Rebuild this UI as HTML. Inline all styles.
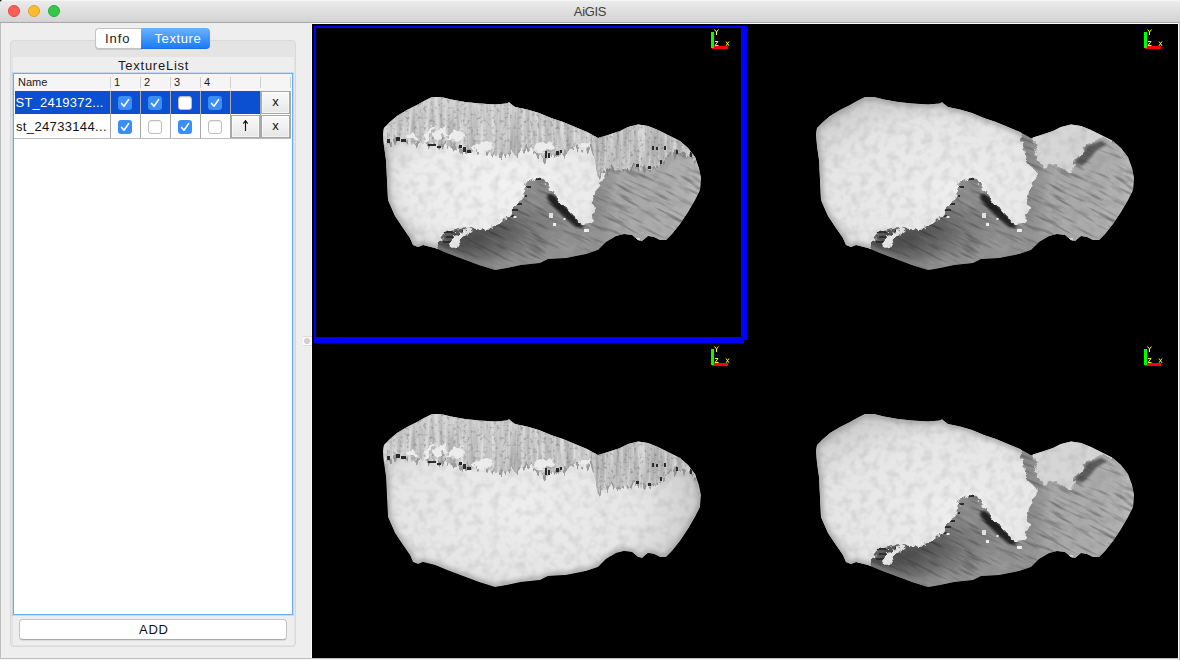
<!DOCTYPE html>
<html><head><meta charset="utf-8">
<style>
*{box-sizing:border-box;margin:0;padding:0}
html,body{width:1180px;height:660px;overflow:hidden;background:#eeeeee;font-family:"Liberation Sans",sans-serif;}
#win{position:absolute;left:0;top:0;width:1180px;height:660px;background:#eeeeee;overflow:hidden}
.abs{position:absolute}
#titlebar{left:0;top:0;width:1180px;height:23px;background:linear-gradient(#ebebeb,#d3d3d3 21px,#bdbdbd 21px,#bdbdbd 22px);border-bottom:1px solid #a6a6a6;border-top:1px solid #f5f5f5}
#title{left:0;width:1180px;top:4px;text-align:center;font-size:13px;color:#3e3e3e;line-height:15px;letter-spacing:-0.3px}
.tl{width:12px;height:12px;border-radius:50%;top:5px}
#lb{left:0;top:23px;width:1px;height:638px;background:#bdbdbd}
#bb{left:0;top:658px;width:1180px;height:1px;background:#c0c0c0}
#bb2{left:0;top:659px;width:1180px;height:1px;background:#f4f4f4}
#pane{left:10px;top:40px;width:286px;height:607px;background:#e4e4e4;border:1px solid #d9d9d9;border-radius:4px}
#inner{left:13px;top:57px;width:281px;height:588px;background:#eeeeee}
#tabs{left:95px;top:28px;height:21px}
#tabInfo{left:95px;top:28px;width:47px;height:21px;background:#fff;border:1px solid #c3c3c3;border-right:none;border-radius:4px 0 0 4px;box-shadow:0 1px 0 rgba(0,0,0,.12);font-size:13px;line-height:19px;text-align:left;padding-left:9px;letter-spacing:.95px;color:#222}
#tabTex{left:141px;top:28px;width:69px;height:21px;background:linear-gradient(#6cb2fb,#1a7cf9);border-radius:0 4px 4px 0;font-size:13px;line-height:22px;text-align:left;padding-left:13.5px;letter-spacing:.6px;color:#fff;border-bottom:1px solid #1a6de0}
#tlist{left:118px;top:58.5px;white-space:nowrap;font-size:13px;line-height:14px;color:#1a1a1a;letter-spacing:.76px}
#table{left:13px;top:73px;width:280px;height:542px;background:#fff;border:1px solid #6aaef2;box-shadow:0 0 0 1px rgba(120,180,245,.35)}
#thead{left:14px;top:74px;width:278px;height:17px;background:#f5f5f5}
.hd{top:76px;font-size:11px;line-height:13px;color:#1a1a1a}
.hsep{top:77px;width:1px;height:11px;background:#cfcfcf}
#row1{left:15px;top:91px;width:245px;height:23px;background:#0a50d1}
.vsep{top:91px;width:1px;height:47px;background:#a9a9a9}
#rowline{left:14px;top:138px;width:277px;height:1px;background:#bcbcbc}
.cell{font-size:13px;line-height:15px;left:16px;white-space:nowrap}
.cb{width:14px;height:14px;border-radius:3px}
.cb.on{background:#3b8ef6}
.cb.off{background:#fff;border:1px solid #bdbdbd;box-shadow:inset 0 1px 1px rgba(0,0,0,.08)}
.btn{width:29px;height:22px;background:linear-gradient(#fafafa,#e6e6e6);border:1px solid #a8a8a8;font-size:13px;line-height:19px;text-align:center;color:#111;box-shadow:inset 0 0 0 1px rgba(255,255,255,.5)}
#add{left:19px;top:619px;width:268px;height:21px;background:#fff;border:1px solid #c4c4c4;border-bottom-color:#a9a9a9;border-radius:4px;text-align:left;padding-left:119px;letter-spacing:.75px;font-size:13px;line-height:19px;color:#111;box-shadow:0 1px 0 rgba(0,0,0,.08)}
#split{left:311px;top:23px;width:1px;height:635px;background:#fafafa}
#handle{left:303px;top:336px;width:9px;height:10px;background:#fbfbfb;border-top:1px solid #dcdcdc;border-bottom:1px solid #dcdcdc}
#hdot{left:304px;top:338px;width:6px;height:6px;border-radius:50%;background:#d4d4d4;border:1px solid #c6c6c6}
#topwhite{left:311px;top:23px;width:868px;height:1px;background:#ffffff}
#rwhite{left:1178px;top:23px;width:1px;height:636px;background:#fbfbfb}
#rgray{left:1179px;top:22px;width:1px;height:638px;background:#bdbdbd}
</style></head><body>
<div id="win">
<div id="titlebar" class="abs"></div>
<div class="abs" style="left:0;top:0;width:3px;height:3px;background:radial-gradient(circle at 100% 100%,transparent 2.5px,#222 3.5px)"></div>
<div class="abs tl" style="left:8px;background:#fc5f58;border:1px solid #e2463f"></div>
<div class="abs tl" style="left:28px;background:#fdbc2f;border:1px solid #e0a028"></div>
<div class="abs tl" style="left:48px;background:#34c84a;border:1px solid #24aa35"></div>
<div id="title" class="abs">AiGIS</div>
<div id="topwhite" class="abs"></div>
<div id="lb" class="abs"></div>
<div id="pane" class="abs"></div>
<div id="inner" class="abs"></div>
<div id="tabInfo" class="abs">Info</div>
<div id="tabTex" class="abs">Texture</div>
<div id="tlist" class="abs">TextureList</div>
<div id="table" class="abs"></div>
<div id="thead" class="abs"></div>
<div class="abs hd" style="left:18px">Name</div>
<div class="abs hd" style="left:114px">1</div>
<div class="abs hd" style="left:144px">2</div>
<div class="abs hd" style="left:174px">3</div>
<div class="abs hd" style="left:204px">4</div>
<div class="abs hsep" style="left:110px"></div><div class="abs hsep" style="left:140px"></div><div class="abs hsep" style="left:170px"></div><div class="abs hsep" style="left:200px"></div><div class="abs hsep" style="left:230px"></div><div class="abs hsep" style="left:260px"></div><div class="abs hsep" style="left:290px"></div>
<div id="row1" class="abs"></div>
<div class="abs vsep" style="left:110px"></div><div class="abs vsep" style="left:140px"></div><div class="abs vsep" style="left:170px"></div><div class="abs vsep" style="left:200px"></div><div class="abs vsep" style="left:230px"></div><div class="abs vsep" style="left:260px"></div><div class="abs vsep" style="left:290px"></div>
<div id="rowline" class="abs"></div>
<div class="abs cell" style="top:95px;left:15.5px;color:#fff;letter-spacing:.22px">ST_2419372...</div>
<div class="abs cell" style="top:119px;color:#111;letter-spacing:.35px">st_24733144...</div>
<!-- checkboxes row1 -->
<div class="abs cb on" style="left:118px;top:96px"></div>
<div class="abs cb on" style="left:148px;top:96px"></div>
<div class="abs cb off" style="left:178px;top:96px"></div>
<div class="abs cb on" style="left:208px;top:96px"></div>
<div class="abs cb on" style="left:118px;top:120px"></div>
<div class="abs cb off" style="left:148px;top:120px"></div>
<div class="abs cb on" style="left:178px;top:120px"></div>
<div class="abs cb off" style="left:208px;top:120px"></div>
<svg class="abs" style="left:0;top:0" width="320" height="150" viewBox="0 0 320 150">
<g fill="none" stroke="#fff" stroke-width="1.6" stroke-linecap="round" stroke-linejoin="round">
<path id="ck" d="M121.6 103.4 L124 106.2 L128.6 99.6"/>
<use href="#ck" x="30"/><use href="#ck" x="90"/>
<use href="#ck" y="24"/><use href="#ck" x="60" y="24"/>
</g></svg>
<div class="abs btn" style="left:261px;top:91px;height:23px;line-height:20px">x</div>
<div class="abs btn" style="left:261px;top:115px;height:23px;line-height:20px">x</div>
<div class="abs btn" style="left:231px;top:115px;height:23px"><svg width="27" height="20" viewBox="0 0 27 20" style="display:block"><path d="M13.5 5 V15 M11.3 7.6 L13.5 4.6 L15.7 7.6" stroke="#111" stroke-width="1.1" fill="none"/></svg></div>
<div id="add" class="abs">ADD</div>
<div id="split" class="abs"></div>
<div id="handle" class="abs"></div><div id="hdot" class="abs"></div>
<div id="bb" class="abs"></div><div id="bb2" class="abs"></div>
<div id="rwhite" class="abs"></div><div id="rgray" class="abs"></div>
<!--VS--><svg class="abs" style="left:312px;top:24px" width="866" height="634" viewBox="312 24 866 634">
<defs>
<path id="sil" d="M383,134 L384,128 390,122 397,116 407,110 417,105 425,100.5 432,97 441,97 451,99.5 465,102 479,103.5 495,104.5 507,103.5 509,102.3 511,104 515,107 527,109.5 539,113 551,118 563,122 575,127 587,132 598,138 608,135 620,131 628,127 638,124.5 648,126 658,130 668,135 680,141 688,148 695,157 699,168 701,178 700,190 695,200 688,212 680,224 672,234 666,240 660,240 654,237 648,236 642,241 638,240 632,235 624,234 616,236 606,242 598,250 586,254 566,258 548,259 540,263 521,265 507,268 495,270 479,265 463,259 447,253 435,248 423,245 418,247 413,245 410,238 403,228 395,216 388,200 387,180 386,160 384,146 Z"/>
<clipPath id="csil"><use href="#sil"/></clipPath>
<path id="band" d="M370,85 L370,146 385,144 397,139 409,140 425,142 435,144 455,146 469,152 481,148 495,155 515,152 531,148 545,158 555,154 575,148 591,146 595,158 598,176 608,168 620,170 636,166 650,170 660,164 670,154 680,152 690,154 696,160 715,160 715,85 Z"/>
<path id="whiteTL" d="M370,85 L600,85 600,160 605,176 599,186 593,198 595,210 591,222 583,224 571,214 559,200 551,190 545,179 535,178 527,182 523,196 517,204 509,216 499,224 487,230 467,228 445,232 441,240 433,260 370,260 Z"/>
<path id="whiteTR" d="M370,85 L587,85 587,134 591,148 593,162 605,172 599,184 595,196 597,208 591,222 583,224 571,214 559,200 551,190 545,179 535,178 527,182 523,196 517,204 509,216 499,224 487,230 467,228 445,232 441,240 433,260 370,260 Z"/>
<path id="lobeTR" d="M600,115 L600,138 604,156 610,169 623,164 630,169 639,172 642,161 650,152 656,143 669,139 682,141 682,115 Z"/>

<!-- filters -->
<filter id="fStreak" filterUnits="userSpaceOnUse" x="360" y="80" width="360" height="120" color-interpolation-filters="sRGB">
<feTurbulence type="fractalNoise" baseFrequency="0.23 0.018" numOctaves="3" seed="4"/>
<feColorMatrix type="matrix" values="0.42 0 0 0 0.57  0.42 0 0 0 0.57  0.42 0 0 0 0.57  0 0 0 0 1"/>
</filter>
<filter id="fTeeth" filterUnits="userSpaceOnUse" x="360" y="70" width="370" height="140" color-interpolation-filters="sRGB">
<feTurbulence type="fractalNoise" baseFrequency="0.28 0.012" numOctaves="2" seed="11"/>
<feColorMatrix type="matrix" values="0 0 0 0 .5  0 1 0 0 0  0 0 1 0 0  0 0 0 0 1" result="n"/>
<feDisplacementMap in="SourceGraphic" in2="n" scale="16" xChannelSelector="R" yChannelSelector="G"/>
</filter>
<filter id="fTeeth2" filterUnits="userSpaceOnUse" x="360" y="70" width="370" height="140" color-interpolation-filters="sRGB">
<feTurbulence type="fractalNoise" baseFrequency="0.3 0.012" numOctaves="2" seed="23"/>
<feColorMatrix type="matrix" values="0 0 0 0 .5  0 1 0 0 0  0 0 1 0 0  0 0 0 0 1" result="n"/>
<feDisplacementMap in="SourceGraphic" in2="n" scale="22" xChannelSelector="R" yChannelSelector="G"/>
</filter>
<filter id="fJag" filterUnits="userSpaceOnUse" x="360" y="80" width="360" height="200" color-interpolation-filters="sRGB">
<feTurbulence type="fractalNoise" baseFrequency="0.16" numOctaves="2" seed="5" result="n"/>
<feDisplacementMap in="SourceGraphic" in2="n" scale="9" xChannelSelector="R" yChannelSelector="G"/>
</filter>
<filter id="fShadowStreak" filterUnits="userSpaceOnUse" x="300" y="0" width="500" height="400" color-interpolation-filters="sRGB">
<feTurbulence type="fractalNoise" baseFrequency="0.035 0.3" numOctaves="2" seed="9"/>
<feColorMatrix type="matrix" values="0 0 0 0 0  0 0 0 0 0  0 0 0 0 0  -1.7 0 0 0 0.82"/>
</filter>
<filter id="fShadowLight" filterUnits="userSpaceOnUse" x="300" y="0" width="500" height="400" color-interpolation-filters="sRGB">
<feTurbulence type="fractalNoise" baseFrequency="0.04 0.35" numOctaves="2" seed="31"/>
<feColorMatrix type="matrix" values="0 0 0 0 1  0 0 0 0 1  0 0 0 0 1  1.2 0 0 0 -0.62"/>
</filter>
<filter id="fBump" filterUnits="userSpaceOnUse" x="360" y="80" width="360" height="200" color-interpolation-filters="sRGB">
<feTurbulence type="fractalNoise" baseFrequency="0.11" numOctaves="2" seed="2"/>
<feColorMatrix type="matrix" values="0 0 0 0 0.35  0 0 0 0 0.35  0 0 0 0 0.35  -1.1 0 0 0 0.62"/>
</filter>

<mask id="mBand" maskUnits="userSpaceOnUse" x="360" y="80" width="360" height="130"><use href="#band" fill="#fff" filter="url(#fTeeth)"/></mask>

<radialGradient id="gWhite" gradientUnits="userSpaceOnUse" cx="500" cy="185" r="130" gradientTransform="translate(500 185) scale(1 .62) translate(-500 -185)">
<stop offset="0" stop-color="#f2f2f2"/><stop offset=".7" stop-color="#ebebeb"/><stop offset="1" stop-color="#d6d6d6"/></radialGradient>
<linearGradient id="gShadow" gradientUnits="userSpaceOnUse" x1="540" y1="180" x2="560" y2="265">
<stop offset="0" stop-color="#7a7a7a"/><stop offset=".5" stop-color="#868686"/><stop offset="1" stop-color="#9c9c9c"/></linearGradient>
<linearGradient id="gShadowR" gradientUnits="userSpaceOnUse" x1="596" y1="0" x2="701" y2="0">
<stop offset="0" stop-color="#9a9a9a" stop-opacity="0"/><stop offset=".2" stop-color="#a6a6a6"/><stop offset=".85" stop-color="#afafaf"/><stop offset="1" stop-color="#bebebe"/></linearGradient>
<linearGradient id="gBandShade" gradientUnits="userSpaceOnUse" x1="0" y1="97" x2="0" y2="165">
<stop offset="0" stop-color="#d8d8d8" stop-opacity=".55"/><stop offset=".5" stop-color="#c0c0c0" stop-opacity=".2"/><stop offset="1" stop-color="#a0a0a0" stop-opacity=".15"/></linearGradient>
<radialGradient id="gLight" gradientUnits="userSpaceOnUse" cx="520" cy="190" r="190" gradientTransform="translate(520 190) scale(1 .55) translate(-520 -190)">
<stop offset="0" stop-color="#eeeeee"/><stop offset=".65" stop-color="#e5e5e5"/><stop offset="1" stop-color="#c8c8c8"/></radialGradient>

<radialGradient id="gShDark" gradientUnits="userSpaceOnUse" cx="472" cy="240" r="105" gradientTransform="translate(472 240) rotate(-12) scale(1 .42) translate(-472 -240)">
<stop offset="0" stop-color="#4a4a4a"/><stop offset=".45" stop-color="#5c5c5c" stop-opacity=".85"/><stop offset="1" stop-color="#8b8b8b" stop-opacity="0"/></radialGradient>
<linearGradient id="gShBottom" gradientUnits="userSpaceOnUse" x1="520" y1="225" x2="535" y2="270">
<stop offset="0" stop-color="#a0a0a0" stop-opacity="0"/><stop offset="1" stop-color="#a0a0a0" stop-opacity=".5"/></linearGradient>
<filter id="fBlur1" filterUnits="userSpaceOnUse" x="530" y="175" width="70" height="65"><feGaussianBlur stdDeviation="1.3"/></filter>
<filter id="fBlur2" filterUnits="userSpaceOnUse" x="630" y="130" width="60" height="50"><feGaussianBlur stdDeviation="1.2"/></filter>
<filter id="fBlur3" filterUnits="userSpaceOnUse" x="360" y="80" width="360" height="200"><feGaussianBlur stdDeviation="2.2"/></filter>
<clipPath id="cLeft"><rect x="370" y="85" width="226" height="200"/></clipPath>
<g id="rim"><use href="#sil" fill="none" stroke="#8c8c8c" stroke-width="7" opacity=".55" filter="url(#fBlur3)"/></g>
<filter id="fMottle" filterUnits="userSpaceOnUse" x="360" y="80" width="360" height="120" color-interpolation-filters="sRGB">
<feTurbulence type="fractalNoise" baseFrequency="0.3" numOctaves="2" seed="17"/>
<feColorMatrix type="matrix" values="0 0 0 0 0.25  0 0 0 0 0.25  0 0 0 0 0.25  -2.2 0 0 0 1.0"/>
</filter>
<!-- composite pieces -->
<g id="pShadow">
<use href="#sil" fill="#8b8b8b"/>
<rect x="380" y="150" width="330" height="130" fill="url(#gShDark)"/>
<rect x="380" y="150" width="330" height="130" fill="url(#gShBottom)"/>
<rect x="590" y="120" width="115" height="130" fill="url(#gShadowR)"/>
<g transform="rotate(27 540 200)" opacity=".6"><rect x="340" y="40" width="420" height="320" filter="url(#fShadowStreak)"/><rect x="340" y="40" width="420" height="320" filter="url(#fShadowLight)" opacity=".45"/></g>
<path d="M547,195 L552,194 560,201 570,211 579,221 584,228 576,227 565,218 555,208 548,200 Z" fill="#121212" opacity=".9" filter="url(#fBlur1)"/>
<g fill="#2c2c2c"><rect x="524" y="186" width="7" height="2"/><rect x="521" y="195" width="6" height="2"/><rect x="516" y="203" width="6" height="2"/><rect x="512" y="209" width="6" height="2"/><rect x="508" y="215" width="6" height="2"/><rect x="536" y="178" width="5" height="2"/><rect x="444" y="231" width="12" height="2"/><rect x="446" y="236" width="10" height="2"/><rect x="443" y="241" width="9" height="2"/><rect x="462" y="230" width="8" height="2"/></g>
<path d="M449,244 L455,236 468,228 472,231 462,238 457,248 Z" fill="#e6e6e6" filter="url(#fJag)"/>
<g fill="#f0f0f0"><rect x="549" y="213" width="4" height="5"/><rect x="553" y="223" width="3" height="3"/><rect x="563.5" y="218" width="2" height="2"/><rect x="584" y="229" width="5" height="3"/><rect x="513.5" y="216" width="3" height="2"/><rect x="636" y="238" width="4" height="3" fill="#ddd"/></g>
</g>
<g id="pBand">
<use href="#band" fill="#7c7c7c" filter="url(#fTeeth2)" transform="translate(0 1.5)" opacity=".7"/>
<g mask="url(#mBand)">
<g transform="translate(0 0)"><rect x="360" y="80" width="360" height="120" filter="url(#fStreak)"/></g>
<rect x="360" y="80" width="360" height="120" fill="url(#gBandShade)"/>
<rect x="360" y="80" width="360" height="120" filter="url(#fMottle)" opacity=".5"/>
</g>
<g fill="#ececec" filter="url(#fJag)">
<path d="M424,141 L427,131 431,125 434,126 431,134 430,142 Z"/>
<path d="M433,141 L436,131 440,127 446,128 447,134 441,136 439,142 Z"/>
<path d="M447,141 L449,133 455,130 463,131 465,137 460,142 Z"/>
<path d="M474,150 L477,144 486,142 492,145 491,151 Z"/>
<path d="M534,150 L537,143 545,141 553,143 552,149 545,152 Z"/>
<path d="M578,149 L581,144 589,143 591,148 Z"/>
<path d="M405,139 L408,134 414,133 416,139 Z"/>
</g>
<g fill="#2a2a2a">
<rect x="396" y="137" width="4" height="4"/><rect x="401" y="139" width="5" height="3"/><rect x="387" y="139" width="3" height="4"/>
<rect x="463" y="147" width="3" height="5"/><rect x="467" y="150" width="4" height="3"/><rect x="459" y="145" width="3" height="3"/>
<rect x="545" y="151" width="2" height="7"/><rect x="548" y="153" width="2" height="5"/><rect x="556" y="151" width="3" height="4"/><rect x="560" y="150" width="2" height="3"/>
<rect x="428" y="144" width="8" height="2"/><rect x="437" y="146" width="4" height="2"/>
<rect x="652" y="146" width="2" height="4"/><rect x="656" y="147" width="2" height="3"/><rect x="664" y="146" width="2" height="4"/><rect x="676" y="150" width="2" height="4"/><rect x="690" y="152" width="2" height="5"/>
<rect x="636" y="164" width="3" height="3"/><rect x="648" y="166" width="3" height="3"/><rect x="660" y="160" width="2" height="4"/>
</g>
</g>

<g id="axes">
<rect x="712" y="46" width="16" height="3" fill="#ff0000"/>
<rect x="711" y="32" width="3" height="16" fill="#00ff00"/>
<g fill="none" stroke="#ffff00" stroke-width="1">
<path d="M714.5,29.5 L716.5,32 L718.5,29.5 M716.5,32 V35"/>
<path d="M715,41.5 H718 L715,45.5 H718.5"/>
<path d="M726,41.5 L729,45.8 M729,41.5 L726,45.8"/>
</g></g>
</defs>
<rect x="312" y="24" width="866" height="634" fill="#000"/>
<!-- TL -->
<g clip-path="url(#csil)">
<use href="#pShadow"/>
<use href="#whiteTL" fill="url(#gWhite)" filter="url(#fJag)"/>
<rect x="360" y="80" width="360" height="200" filter="url(#fBump)" opacity=".3"/>
<g clip-path="url(#cLeft)"><use href="#rim"/></g>
<use href="#pBand"/>
</g>
<!-- TR -->
<g transform="translate(433 0)"><g clip-path="url(#csil)">
<use href="#pShadow"/>
<use href="#whiteTR" fill="url(#gLight)" filter="url(#fJag)"/>
<path d="M641,163 L649,153 656,145 668,141 674,144 664,150 657,158 649,166 Z" fill="#1c1c1c" opacity=".55" filter="url(#fBlur2)"/>
<use href="#lobeTR" fill="#d6d6d6" filter="url(#fJag)"/>
<rect x="360" y="80" width="360" height="200" filter="url(#fBump)" opacity=".3"/>
<g clip-path="url(#cLeft)"><use href="#rim"/></g>
</g></g>
<!-- BL -->
<g transform="translate(0 317)"><g clip-path="url(#csil)">
<use href="#sil" fill="url(#gLight)"/>
<rect x="360" y="80" width="360" height="200" filter="url(#fBump)" opacity=".3"/>
<use href="#rim"/>
<use href="#pBand"/>
</g></g>
<!-- BR -->
<g transform="translate(433 317)"><g clip-path="url(#csil)">
<use href="#pShadow"/>
<use href="#whiteTR" fill="url(#gLight)" filter="url(#fJag)"/>
<path d="M641,163 L649,153 656,145 668,141 674,144 664,150 657,158 649,166 Z" fill="#1c1c1c" opacity=".55" filter="url(#fBlur2)"/>
<use href="#lobeTR" fill="#d6d6d6" filter="url(#fJag)"/>
<rect x="360" y="80" width="360" height="200" filter="url(#fBump)" opacity=".3"/>
<g clip-path="url(#cLeft)"><use href="#rim"/></g>
</g></g>
<use href="#axes"/><use href="#axes" x="433"/><use href="#axes" y="317"/><use href="#axes" x="433" y="317"/>
<g fill="#0000ff">
<rect x="314" y="26" width="433" height="2"/>
<rect x="314" y="26" width="2" height="317"/>
<rect x="741" y="26" width="6" height="314"/>
<rect x="314" y="337" width="430" height="6"/>
</g>
</svg>
<!--VE-->
</div>
</body></html>
